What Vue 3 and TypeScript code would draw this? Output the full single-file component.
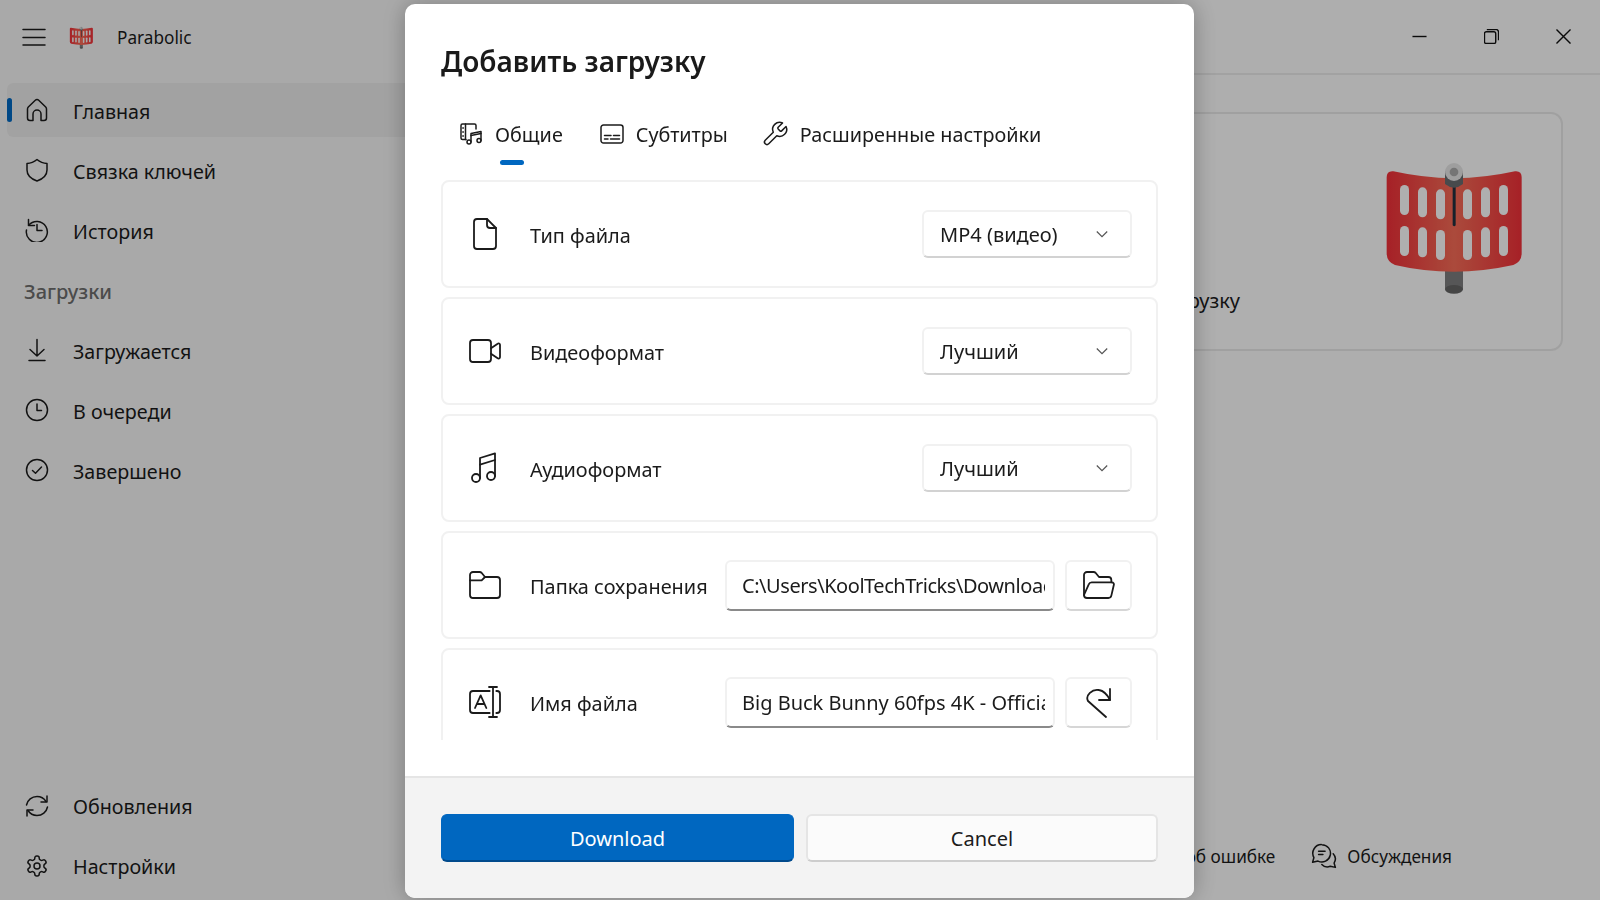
<template>
  <div class="window">
    <svg class="defs" width="0" height="0">
      <defs>
        <linearGradient id="plate" x1="0" x2="1" y1="0" y2="0">
          <stop offset="0" stop-color="#ee2f38" />
          <stop offset="0.5" stop-color="#f56b56" />
          <stop offset="1" stop-color="#ee2f38" />
        </linearGradient>
        <mask id="slots" maskUnits="userSpaceOnUse" x="0" y="0" width="510" height="450">
          <rect width="510" height="450" fill="#fff" />
          <rect v-for="s in slots" :key="s.x + '-' + s.y" :x="s.x" :y="s.y" width="27" height="90" rx="13.5" fill="#000" />
        </mask>
        <symbol id="logo" viewBox="0 0 510 450">
          <path d="M225 350h54v68h-54z" fill="#7c7c7d" />
          <ellipse cx="252" cy="418" rx="27" ry="13" fill="#636364" />
          <path
            d="M50 82Q50 62 70 64Q160 84 252 85Q345 84 435 64Q455 62 455 82V310Q455 335 430 345Q340 365 252 365Q160 365 75 345Q50 335 50 310Z"
            fill="url(#plate)"
            mask="url(#slots)"
          />
          <path d="M248 100h9v126q-4.500 6-9 0z" fill="#22303e" />
          <path d="M225 64h54v38q-27 22-54 0z" fill="#686a6e" />
          <circle cx="252" cy="66" r="27" fill="#e2e2e2" />
          <circle cx="252" cy="66" r="13" fill="#a8a8a8" />
        </symbol>
      </defs>
    </svg>

    <aside class="sidebar">
      <div class="brand">
        <svg class="ico burger" viewBox="0 0 24 24"><path d="M1 4.500H23M1 12.500H23M1 20H23" /></svg>
        <svg class="brand-logo"><use href="#logo" /></svg>
        <span class="brand-name">Parabolic</span>
      </div>
      <nav class="nav">
        <template v-for="item in topNav" :key="item.label">
          <div v-if="item.section" class="nav-section">{{ item.label }}</div>
          <div v-else class="nav-item" :class="{ active: item.active }">
            <svg class="ico" viewBox="0 0 24 24"><path v-for="d in icons[item.icon]" :key="d" :d="d" /></svg>
            <span>{{ item.label }}</span>
          </div>
        </template>
      </nav>
      <nav class="nav nav-bottom">
        <div v-for="item in bottomNav" :key="item.label" class="nav-item">
          <svg class="ico" viewBox="0 0 24 24"><path v-for="d in icons[item.icon]" :key="d" :d="d" /></svg>
          <span>{{ item.label }}</span>
        </div>
      </nav>
    </aside>

    <main class="main">
      <header class="titlebar">
        <svg class="win-btn" viewBox="0 0 16 16"><path d="M.5 8H15.500" /></svg>
        <svg class="win-btn" viewBox="0 0 16 16"><path d="M3 .5H12A3 3 0 0 1 15.500 4V12M2.500 3H10.500A2 2 0 0 1 12.500 5V13.500A2 2 0 0 1 10.500 15.500H2.500A2 2 0 0 1 .5 13.500V5A2 2 0 0 1 2.500 3Z" /></svg>
        <svg class="win-btn" viewBox="0 0 16 16"><path d="M.5 .5L15.500 15.500M15.500 .5L.5 15.500" /></svg>
      </header>
      <section class="hero">
        <div class="hero-text">Добавить загрузку</div>
        <svg class="hero-logo"><use href="#logo" /></svg>
      </section>
      <footer class="links">
        <span>Сообщить об ошибке</span>
        <span class="link">
          <svg class="ico" viewBox="0 0 24 24"><path v-for="d in icons.chat" :key="d" :d="d" /></svg>
          Обсуждения
        </span>
      </footer>
    </main>

    <div class="overlay">
      <div class="dialog">
        <div class="dialog-content">
          <h2 class="dialog-title">Добавить загрузку</h2>
          <div class="tabs">
            <div v-for="tab in tabs" :key="tab.label" class="tab" :class="{ active: tab.active }">
              <svg class="ico" :class="'ico-' + tab.icon" viewBox="0 0 24 24"><path v-for="d in icons[tab.icon]" :key="d" :d="d" /></svg>
              <span>{{ tab.label }}</span>
            </div>
          </div>
          <div class="rows">
            <div v-for="row in rows" :key="row.label" class="row">
              <svg class="ico ico-lg" viewBox="0 0 24 24"><path v-for="d in icons[row.icon]" :key="d" :d="d" /></svg>
              <span class="row-label">{{ row.label }}</span>
              <div v-if="row.select" class="select">
                <span>{{ row.select }}</span>
                <svg class="chevron" viewBox="0 0 12 12"><path d="M.8 3.500L6 8.700L11.200 3.500" /></svg>
              </div>
              <template v-else>
                <div class="input" :class="{ tight: row.tight }"><div class="input-text">{{ row.value }}</div></div>
                <button class="icon-btn">
                  <svg class="ico ico-lg" viewBox="0 0 24 24"><path v-for="d in icons[row.action!]" :key="d" :d="d" /></svg>
                </button>
              </template>
            </div>
          </div>
        </div>
        <div class="dialog-footer">
          <button class="btn btn-primary">Download</button>
          <button class="btn">Cancel</button>
        </div>
      </div>
    </div>
  </div>
</template>

<script setup lang="ts">
interface NavItem {
  label: string;
  icon: string;
  active?: boolean;
  section?: boolean;
}
interface Row {
  label: string;
  icon: string;
  select?: string;
  value?: string;
  action?: string;
  tight?: boolean;
}

const icons: Record<string, string[]> = {
  home: ["M10.300 2.200a2.400 2.400 0 0 1 3.400 0l7 6.800a3 3 0 0 1 .8 2.100V20a2.500 2.500 0 0 1-2.500 2.500H16V16a4 4 0 0 0-8 0v6.500H5A2.500 2.500 0 0 1 2.500 20v-8.900a3 3 0 0 1 .8-2.100Z"],
  shield: ["M12 1.500C15 4 18 5.300 22 5.500V12C22 17 18.500 20.700 12 23C5.500 20.700 2 17 2 12V5.500C6 5.300 9 4 12 1.500Z"],
  history: ["M3.500 1.500V7.500H9.500", "M3.700 7.300A10.500 10.500 0 1 1 1.500 12", "M12 6.500V12.500H17"],
  download: ["M12 1.500V18M5 11.500L12 18L19 11.500", "M4 22.500H20"],
  clock: ["M22.500 12a10.500 10.500 0 1 1-21 0 10.500 10.500 0 0 1 21 0Z", "M12 6V12.500H16.500"],
  check: ["M22.500 12a10.500 10.500 0 1 1-21 0 10.500 10.500 0 0 1 21 0Z", "M7.500 12.500L10.500 15.200L16.500 9"],
  refresh: [
    "M1.500 11C2.500 6 6.800 2.500 12 2.500C15.700 2.500 19 4.300 21 7.500",
    "M22 2V8H16",
    "M22.500 13C21.500 18 17.200 21.500 12 21.500C8.300 21.500 5 19.700 3 16.500",
    "M2 22V16H8",
  ],
  gear: [
    "M12.220 2h-.44a2 2 0 0 0-2 2v.18a2 2 0 0 1-1 1.730l-.43.25a2 2 0 0 1-2 0l-.15-.08a2 2 0 0 0-2.730.73l-.22.38a2 2 0 0 0 .73 2.730l.15.1a2 2 0 0 1 1 1.720v.51a2 2 0 0 1-1 1.740l-.15.09a2 2 0 0 0-.73 2.730l.22.38a2 2 0 0 0 2.730.73l.15-.08a2 2 0 0 1 2 0l.43.25a2 2 0 0 1 1 1.730V20a2 2 0 0 0 2 2h.44a2 2 0 0 0 2-2v-.18a2 2 0 0 1 1-1.730l.43-.25a2 2 0 0 1 2 0l.15.08a2 2 0 0 0 2.730-.73l.22-.39a2 2 0 0 0-.73-2.730l-.15-.08a2 2 0 0 1-1-1.740v-.5a2 2 0 0 1 1-1.740l.15-.09a2 2 0 0 0 .73-2.730l-.22-.38a2 2 0 0 0-2.730-.73l-.15.08a2 2 0 0 1-2 0l-.43-.25a2 2 0 0 1-1-1.730V4a2 2 0 0 0-2-2Z",
    "M15 12a3 3 0 1 1-6 0 3 3 0 0 1 6 0Z",
  ],
  chat: [
    "M10 1.500a8 8 0 1 1-3.500 15.200L1.500 17.800l1.200-4.400A8 8 0 0 1 10 1.500Z",
    "M7 7.500H13M7 10.500H11",
    "M20.500 10a7 7 0 0 1 .8 8.500l1.200 4-4.700-1a7 7 0 0 1-7.800-1.700",
  ],
  media: [
    "M7 17.500H3.500A1.500 1.500 0 0 1 2 16V3.500A1.500 1.500 0 0 1 3.500 2H15.500A1.500 1.500 0 0 1 17 3.500V7",
    "M6.500 2V17.500",
    "M3.800 6H4.400M3.800 10H4.400M3.800 14H4.400",
    "M12 20V11.500L22 9.500V18.500",
    "M12 13.500L22 11.500",
    "M12 20a2 2 0 1 1-4 0 2 2 0 0 1 4 0Z",
    "M22 18.500a2 2 0 1 1-4 0 2 2 0 0 1 4 0Z",
  ],
  subtitles: [
    "M3.500 3H20.500A2.500 2.500 0 0 1 23 5.500V18.500A2.500 2.500 0 0 1 20.500 21H3.500A2.500 2.500 0 0 1 1 18.500V5.500A2.500 2.500 0 0 1 3.500 3Z",
    "M4.500 13.500H11M13.500 13.500H19.500",
    "M4.500 17H8M10.500 17H19.500",
  ],
  wrench: ["M14.700 6.300a1 1 0 0 0 0 1.400l1.600 1.600a1 1 0 0 0 1.400 0l3.770-3.770a6 6 0 0 1-7.940 7.940l-6.910 6.910a2.120 2.120 0 0 1-3-3l6.910-6.910a6 6 0 0 1 7.940-7.940l-3.760 3.760Z"],
  file: [
    "M13.500 .75H6A2.250 2.250 0 0 0 3.750 3V21A2.250 2.250 0 0 0 6 23.250H18A2.250 2.250 0 0 0 20.250 21V7.500Z",
    "M13.500 .75V5.250A2.250 2.250 0 0 0 15.750 7.500H20.250",
  ],
  video: [
    "M3 3.750H14.250A2.250 2.250 0 0 1 16.500 6V18A2.250 2.250 0 0 1 14.250 20.250H3A2.250 2.250 0 0 1 .75 18V6A2.250 2.250 0 0 1 3 3.750Z",
    "M16.500 10L21.500 6.500A1.100 1.100 0 0 1 23.250 7.300V16.700A1.100 1.100 0 0 1 21.500 17.500L16.500 14",
  ],
  music: [
    "M8.250 19.500V4.500L19.500 1V18",
    "M8.250 9.500L19.500 6",
    "M8.250 19.500a3 3 0 1 1-6 0 3 3 0 0 1 6 0Z",
    "M19.500 18a3 3 0 1 1-6 0 3 3 0 0 1 6 0Z",
  ],
  folder: [
    "M.75 4.500A2.250 2.250 0 0 1 3 2.250H8A2.200 2.200 0 0 1 9.400 2.800L12 6H21A2.250 2.250 0 0 1 23.250 8.250V19.500A2.250 2.250 0 0 1 21 21.750H3A2.250 2.250 0 0 1 .75 19.500Z",
    "M.75 8.500H9.500L12 6",
  ],
  rename: [
    "M15.500 3.750H3A2.250 2.250 0 0 0 .75 6V18A2.250 2.250 0 0 0 3 20.250H15.500",
    "M20.500 3.750H21A2.250 2.250 0 0 1 23.250 6V18A2.250 2.250 0 0 1 21 20.250H20.500",
    "M18 .75V23.250M15 .75H21M15 23.250H21",
    "M4.500 16.500L8.750 7L13 16.500M6 13.500H11.500",
  ],
  folderOpen: [
    "M.75 19.500V4.500A2.250 2.250 0 0 1 3 2.250H8A2.200 2.200 0 0 1 9.400 2.800L12 6H19A2.250 2.250 0 0 1 21.250 8.250V10",
    "M.75 19.500A2.250 2.250 0 0 0 3 21.750H19A2.400 2.400 0 0 0 21.300 19.800L23.100 12A1.500 1.500 0 0 0 21.700 10H6.500A2.400 2.400 0 0 0 4.300 11.500Z",
  ],
  redo: ["M17.250 23.250L3.750 11.250C1.500 7 7 2 12 3C15 3.500 18 6 20.250 10.500", "M20.250 2.250V10.500H12"],
};

const topNav: NavItem[] = [
  { label: "Главная", icon: "home", active: true },
  { label: "Связка ключей", icon: "shield" },
  { label: "История", icon: "history" },
  { label: "Загрузки", icon: "", section: true },
  { label: "Загружается", icon: "download" },
  { label: "В очереди", icon: "clock" },
  { label: "Завершено", icon: "check" },
];
const bottomNav: NavItem[] = [
  { label: "Обновления", icon: "refresh" },
  { label: "Настройки", icon: "gear" },
];

const tabs = [
  { label: "Общие", icon: "media", active: true },
  { label: "Субтитры", icon: "subtitles" },
  { label: "Расширенные настройки", icon: "wrench" },
];

const rows: Row[] = [
  { label: "Тип файла", icon: "file", select: "MP4 (видео)" },
  { label: "Видеоформат", icon: "video", select: "Лучший" },
  { label: "Аудиоформат", icon: "music", select: "Лучший" },
  {
    label: "Папка сохранения",
    icon: "folder",
    value: "C:\\Users\\KoolTechTricks\\Downloads",
    action: "folderOpen",
    tight: true,
  },
  {
    label: "Имя файла",
    icon: "rename",
    value: "Big Buck Bunny 60fps 4K - Official Blender Foundation Short Film",
    action: "redo",
  },
];

// logo perforation, top and bottom row per column
const slots = [
  [90, 105, 228],
  [144, 112, 232],
  [198, 118, 240],
  [279, 118, 240],
  [333, 112, 232],
  [387, 105, 228],
].flatMap(([x, a, b]) => [
  { x, y: a },
  { x, y: b },
]);
</script>

<style scoped>
.defs {
  position: absolute;
}
.window {
  display: flex;
  width: 1600px;
  height: 900px;
  overflow: hidden;
  position: relative;
  background: #f3f3f3;
  color: #1b1b1b;
  font-family: "Noto Sans", "Open Sans", sans-serif;
  font-size: 20px;
}
.ico {
  width: 24px;
  height: 24px;
  flex: none;
  fill: none;
  stroke: currentColor;
}
.ico path {
  stroke-width: 1.5px;
  vector-effect: non-scaling-stroke;
  stroke-linecap: round;
  stroke-linejoin: round;
}
.ico-lg {
  width: 32px;
  height: 32px;
}
.ico-lg path {
  stroke-width: 1.8px;
}
.ico-wrench {
  width: 28px;
  height: 28px;
  margin: 0 -1px 0 -4px;
}

/* sidebar */
.sidebar {
  width: 420px;
  flex: none;
  display: flex;
  flex-direction: column;
  padding: 0 7px 7px;
  box-sizing: border-box;
}
.brand {
  height: 74px;
  display: flex;
  align-items: center;
  padding-left: 15px;
  flex: none;
}
.brand-logo {
  width: 29px;
  height: 26px;
  margin-left: 21px;
}
.brand-name {
  margin-left: 21px;
  font-size: 17.200px;
}
.nav {
  display: flex;
  flex-direction: column;
  gap: 6px;
  padding-top: 9px;
}
.nav-bottom {
  margin-top: auto;
  padding-top: 0;
}
.nav-item,
.nav-section {
  height: 54px;
  display: flex;
  align-items: center;
  border-radius: 6px;
  position: relative;
}
.nav-item {
  gap: 24px;
  padding-left: 18px;
  font-size: 19.700px;
}
.nav-item span,
.nav-section {
  padding-top: 2px;
}
.nav-bottom .nav-item span {
  padding-top: 0;
}
.nav-section {
  box-sizing: border-box;
  padding-left: 17px;
  font-weight: 500;
  color: #6c6c6c;
}
.nav-item.active {
  background: #e9e9e9;
}
.nav-item.active::before {
  content: "";
  position: absolute;
  left: 0;
  top: 15px;
  width: 5px;
  height: 24px;
  border-radius: 3px;
  background: #0067c0;
}

/* main area behind the dialog */
.main {
  flex: 1;
  display: flex;
  flex-direction: column;
  background: #f9f9f9;
  min-width: 0;
}
.titlebar {
  height: 75px;
  flex: none;
  display: flex;
  align-items: center;
  justify-content: flex-end;
  gap: 57px;
  padding-right: 29px;
  border-bottom: 2px solid #e8e8e8;
  box-sizing: border-box;
}
.win-btn {
  width: 15px;
  height: 15px;
  fill: none;
  stroke: #111;
  stroke-width: 1.500;
}
.hero {
  margin: 37px 37px 0 20px;
  height: 239px;
  display: flex;
  align-items: flex-end;
  border: 2px solid #e6e6e6;
  border-radius: 12px;
  background: #fbfbfb;
  box-sizing: border-box;
}
.hero-text {
  flex: 1;
  text-align: right;
  padding: 0 130px 35px 0;
}
.hero-logo {
  width: 170px;
  height: 150px;
  margin: 0 21px 49px 0;
}
.links {
  margin-top: auto;
  display: flex;
  justify-content: flex-end;
  align-items: center;
  gap: 36px;
  padding: 0 148px 31px 0;
  font-size: 17.200px;
}
.link {
  display: flex;
  align-items: center;
  gap: 10px;
}
.link .ico {
  width: 26px;
  height: 26px;
}

/* dialog */
.overlay {
  position: fixed;
  inset: 0;
  background: rgba(0, 0, 0, 0.3);
  display: flex;
  align-items: center;
  justify-content: center;
}
.dialog {
  width: 789px;
  height: 894px;
  margin: 2px 0 0 -1px;
  border-radius: 10px;
  background: #fff;
  display: flex;
  flex-direction: column;
  overflow: hidden;
  box-shadow: 0 0 24px rgba(0, 0, 0, 0.28);
}
.dialog-content {
  flex: 1;
  min-height: 0;
  padding: 0 36px 36px;
  display: flex;
  flex-direction: column;
}
.dialog-title {
  margin: 37px 0 0;
  font-size: 28px;
  line-height: 40px;
  font-weight: 600;
  color: #1a1a1a;
}
.tabs {
  display: flex;
  gap: 37px;
  margin-top: 29px;
  padding: 0 0 0 18px;
  height: 70px;
  flex: none;
  font-size: 19.800px;
}
.tab {
  height: 48px;
  display: flex;
  align-items: center;
  gap: 12px;
  position: relative;
}
.tab.active::after {
  content: "";
  position: absolute;
  left: 41px;
  top: 50px;
  width: 24px;
  height: 5px;
  border-radius: 3px;
  background: #0067c0;
}
.rows {
  flex: 1;
  min-height: 0;
  overflow: hidden;
  display: flex;
  flex-direction: column;
  gap: 9px;
}
.row {
  height: 108px;
  flex: none;
  box-sizing: border-box;
  border: 2px solid #f1f1f1;
  border-radius: 8px;
  display: flex;
  align-items: center;
  padding: 0 24px 0 26px;
}
.row-label {
  margin-left: 29px;
  padding-top: 3px;
  font-size: 19.900px;
  white-space: nowrap;
}
.select {
  margin-left: auto;
  width: 210px;
  height: 48px;
  box-sizing: border-box;
  display: flex;
  align-items: center;
  justify-content: space-between;
  padding: 0 22px 0 16px;
  border: 2px solid #f1f1f1;
  border-bottom-color: #d2d2d2;
  border-radius: 6px;
  background: #fff;
}
.chevron {
  width: 12px;
  height: 12px;
  fill: none;
  stroke: #555;
  stroke-width: 1.200;
}
.input {
  margin-left: auto;
  width: 330px;
  height: 51px;
  box-sizing: border-box;
  padding: 1px 8px 0 15px;
  display: flex;
  align-items: center;
  border: 2px solid #f1f1f1;
  border-bottom-color: #8a8a8a;
  border-radius: 6px;
}
.input.tight {
  letter-spacing: -0.45px;
}
.input-text {
  overflow: hidden;
  white-space: nowrap;
}
.icon-btn {
  margin-left: 10px;
  width: 67px;
  height: 51px;
  flex: none;
  padding: 0;
  display: flex;
  align-items: center;
  justify-content: center;
  background: #fff;
  color: inherit;
  border: 2px solid #f1f1f1;
  border-bottom-color: #d6d6d6;
  border-radius: 6px;
}
.dialog-footer {
  height: 122px;
  flex: none;
  box-sizing: border-box;
  background: #f3f3f3;
  border-top: 2px solid #e5e5e5;
  padding: 36px 36px 0;
  display: flex;
  gap: 12px;
}
.btn {
  flex: 1;
  height: 48px;
  font: inherit;
  color: #1b1b1b;
  background: #fbfbfb;
  border: 2px solid #e5e5e5;
  border-bottom-color: #cdcdcd;
  border-radius: 6px;
}
.btn-primary {
  flex: 0 0 353px;
  padding-top: 3px;
  color: #fff;
  background: #0067c0;
  border: 1px solid #0067c0;
  border-bottom: 2px solid #004a8c;
}
</style>

<style>
html,
body {
  margin: 0;
  background: #f3f3f3;
}
</style>
